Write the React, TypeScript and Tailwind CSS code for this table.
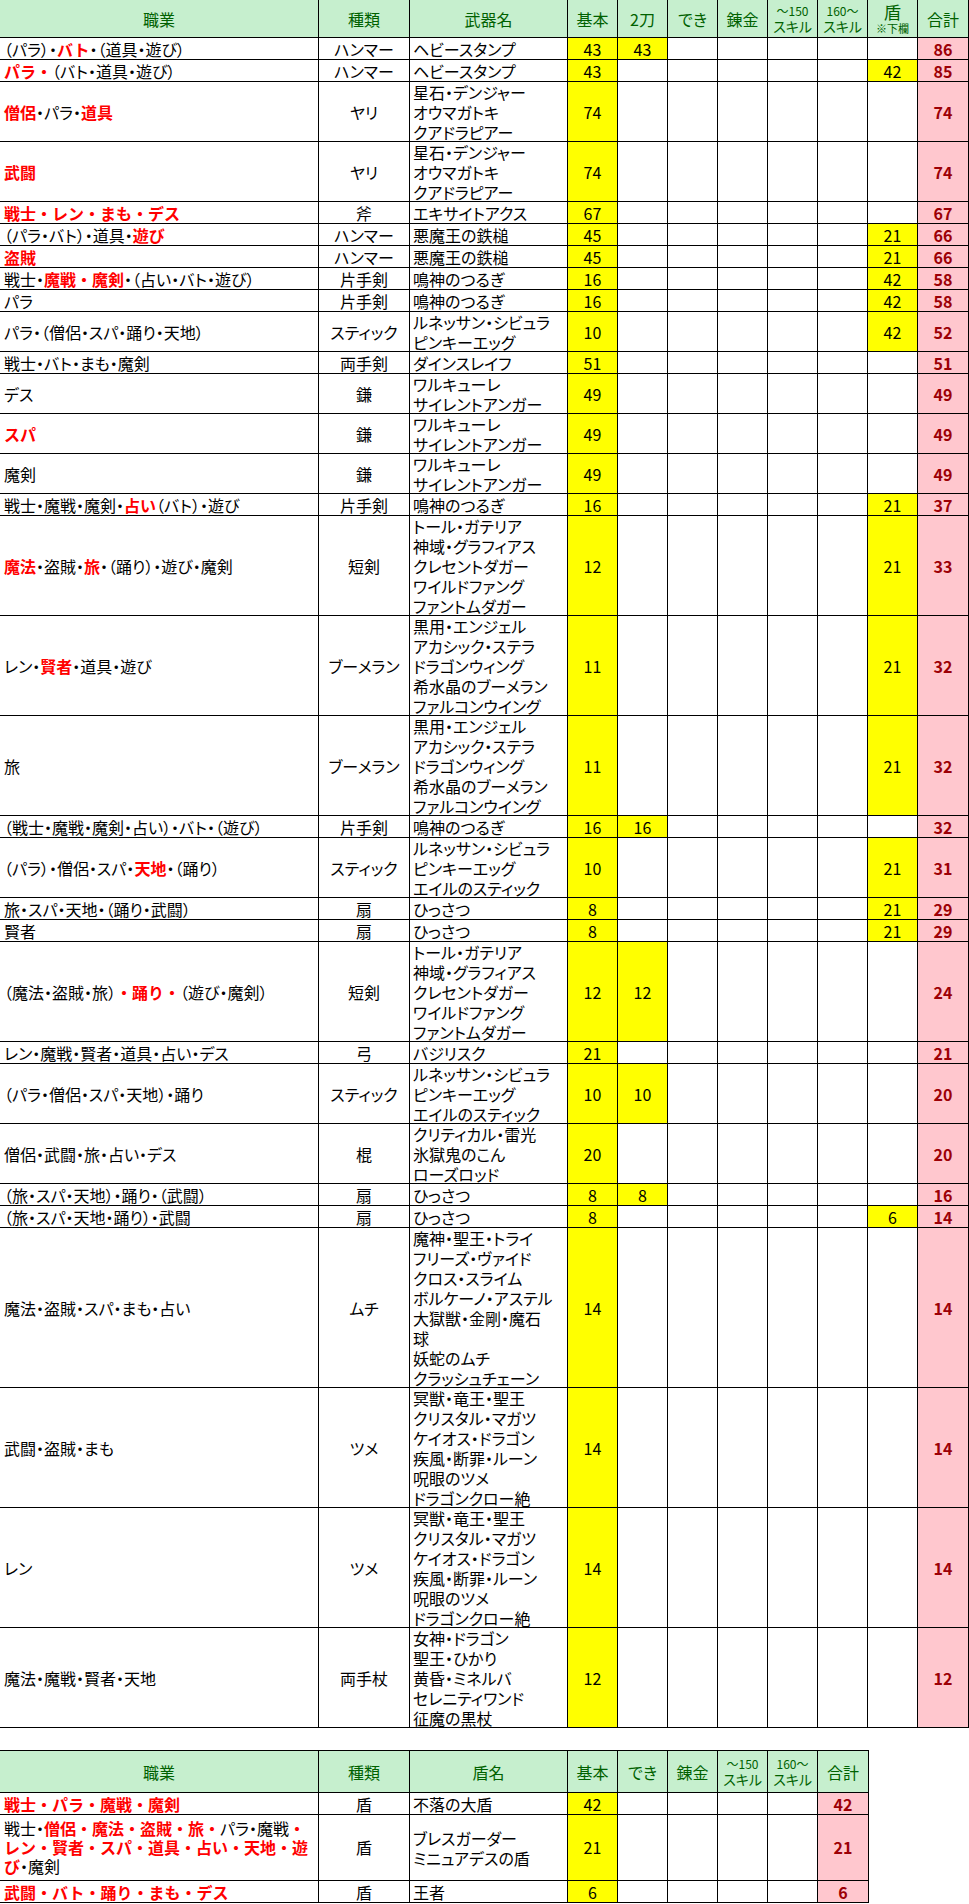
import React from "react"

type Seg = [string, boolean?]

type Row = {
  job: Seg[]
  type: string
  weapons: string[]
  base: number
  dual?: number
  shield?: number
  total: number
}

const rows: Row[] = [
  { job: [["（パラ）・"], ["バト", true], ["・（道具・遊び）"]], type: "ハンマー", weapons: ["ヘビースタンプ"], base: 43, dual: 43, total: 86 },
  { job: [["パラ・", true], ["（バト・道具・遊び）"]], type: "ハンマー", weapons: ["ヘビースタンプ"], base: 43, shield: 42, total: 85 },
  { job: [["僧侶", true], ["・パラ・"], ["道具", true]], type: "ヤリ", weapons: ["星石・デンジャー", "オウマガトキ", "クアドラピアー"], base: 74, total: 74 },
  { job: [["武闘", true]], type: "ヤリ", weapons: ["星石・デンジャー", "オウマガトキ", "クアドラピアー"], base: 74, total: 74 },
  { job: [["戦士・レン・まも・デス", true]], type: "斧", weapons: ["エキサイトアクス"], base: 67, total: 67 },
  { job: [["（パラ・バト）・道具・"], ["遊び", true]], type: "ハンマー", weapons: ["悪魔王の鉄槌"], base: 45, shield: 21, total: 66 },
  { job: [["盗賊", true]], type: "ハンマー", weapons: ["悪魔王の鉄槌"], base: 45, shield: 21, total: 66 },
  { job: [["戦士・"], ["魔戦・魔剣", true], ["・（占い・バト・遊び）"]], type: "片手剣", weapons: ["鳴神のつるぎ"], base: 16, shield: 42, total: 58 },
  { job: [["パラ"]], type: "片手剣", weapons: ["鳴神のつるぎ"], base: 16, shield: 42, total: 58 },
  { job: [["パラ・（僧侶・スパ・踊り・天地）"]], type: "スティック", weapons: ["ルネッサン・シビュラ", "ピンキーエッグ"], base: 10, shield: 42, total: 52 },
  { job: [["戦士・バト・まも・魔剣"]], type: "両手剣", weapons: ["ダインスレイフ"], base: 51, total: 51 },
  { job: [["デス"]], type: "鎌", weapons: ["ワルキューレ", "サイレントアンガー"], base: 49, total: 49 },
  { job: [["スパ", true]], type: "鎌", weapons: ["ワルキューレ", "サイレントアンガー"], base: 49, total: 49 },
  { job: [["魔剣"]], type: "鎌", weapons: ["ワルキューレ", "サイレントアンガー"], base: 49, total: 49 },
  { job: [["戦士・魔戦・魔剣・"], ["占い", true], ["（バト）・遊び"]], type: "片手剣", weapons: ["鳴神のつるぎ"], base: 16, shield: 21, total: 37 },
  {
    job: [["魔法", true], ["・盗賊・"], ["旅", true], ["・（踊り）・遊び・魔剣"]],
    type: "短剣",
    weapons: ["トール・ガテリア", "神域・グラフィアス", "クレセントダガー", "ワイルドファング", "ファントムダガー"],
    base: 12,
    shield: 21,
    total: 33,
  },
  {
    job: [["レン・"], ["賢者", true], ["・道具・遊び"]],
    type: "ブーメラン",
    weapons: ["黒用・エンジェル", "アカシック・ステラ", "ドラゴンウィング", "希水晶のブーメラン", "ファルコンウイング"],
    base: 11,
    shield: 21,
    total: 32,
  },
  {
    job: [["旅"]],
    type: "ブーメラン",
    weapons: ["黒用・エンジェル", "アカシック・ステラ", "ドラゴンウィング", "希水晶のブーメラン", "ファルコンウイング"],
    base: 11,
    shield: 21,
    total: 32,
  },
  { job: [["（戦士・魔戦・魔剣・占い）・バト・（遊び）"]], type: "片手剣", weapons: ["鳴神のつるぎ"], base: 16, dual: 16, total: 32 },
  {
    job: [["（パラ）・僧侶・スパ・"], ["天地", true], ["・（踊り）"]],
    type: "スティック",
    weapons: ["ルネッサン・シビュラ", "ピンキーエッグ", "エイルのスティック"],
    base: 10,
    shield: 21,
    total: 31,
  },
  { job: [["旅・スパ・天地・（踊り・武闘）"]], type: "扇", weapons: ["ひっさつ"], base: 8, shield: 21, total: 29 },
  { job: [["賢者"]], type: "扇", weapons: ["ひっさつ"], base: 8, shield: 21, total: 29 },
  {
    job: [["（魔法・盗賊・旅）"], ["・踊り・", true], ["（遊び・魔剣）"]],
    type: "短剣",
    weapons: ["トール・ガテリア", "神域・グラフィアス", "クレセントダガー", "ワイルドファング", "ファントムダガー"],
    base: 12,
    dual: 12,
    total: 24,
  },
  { job: [["レン・魔戦・賢者・道具・占い・デス"]], type: "弓", weapons: ["バジリスク"], base: 21, total: 21 },
  {
    job: [["（パラ・僧侶・スパ・天地）・踊り"]],
    type: "スティック",
    weapons: ["ルネッサン・シビュラ", "ピンキーエッグ", "エイルのスティック"],
    base: 10,
    dual: 10,
    total: 20,
  },
  {
    job: [["僧侶・武闘・旅・占い・デス"]],
    type: "棍",
    weapons: ["クリティカル・雷光", "氷獄鬼のこん", "ローズロッド"],
    base: 20,
    total: 20,
  },
  { job: [["（旅・スパ・天地）・踊り・（武闘）"]], type: "扇", weapons: ["ひっさつ"], base: 8, dual: 8, total: 16 },
  { job: [["（旅・スパ・天地・踊り）・武闘"]], type: "扇", weapons: ["ひっさつ"], base: 8, shield: 6, total: 14 },
  {
    job: [["魔法・盗賊・スパ・まも・占い"]],
    type: "ムチ",
    weapons: [
      "魔神・聖王・トライ",
      "フリーズ・ヴァイド",
      "クロス・スライム",
      "ボルケーノ・アステル",
      "大獄獣・金剛・魔石",
      "球",
      "妖蛇のムチ",
      "クラッシュチェーン",
    ],
    base: 14,
    total: 14,
  },
  {
    job: [["武闘・盗賊・まも"]],
    type: "ツメ",
    weapons: ["冥獣・竜王・聖王", "クリスタル・マガツ", "ケイオス・ドラゴン", "疾風・断罪・ルーン", "呪眼のツメ", "ドラゴンクロー絶"],
    base: 14,
    total: 14,
  },
  {
    job: [["レン"]],
    type: "ツメ",
    weapons: ["冥獣・竜王・聖王", "クリスタル・マガツ", "ケイオス・ドラゴン", "疾風・断罪・ルーン", "呪眼のツメ", "ドラゴンクロー絶"],
    base: 14,
    total: 14,
  },
  {
    job: [["魔法・魔戦・賢者・天地"]],
    type: "両手杖",
    weapons: ["女神・ドラゴン", "聖王・ひかり", "黄昏・ミネルバ", "セレニティワンド", "征魔の黒杖"],
    base: 12,
    total: 12,
  },
]

// red highlighted jobs are set full width, like the sheet's bold gothic
function Job({ segs }: { segs: Seg[] }) {
  return (
    <>
      {segs.map(([text, red], i) => (
        <span key={i} className={red ? "font-bold text-[#ff0000] [font-feature-settings:normal]" : ""}>
          {text}
        </span>
      ))}
    </>
  )
}

function Skill({ top }: { top: string }) {
  return (
    <div className="flex flex-col items-center">
      <span className="text-[12px] leading-[14px]">{top}</span>
      <span className="text-[14px] leading-[16px]">スキル</span>
    </div>
  )
}

const head = "flex shrink-0 items-center justify-center border-r border-black"
const cell = "flex shrink-0 items-center border-r border-black"
const num = "flex w-[50px] shrink-0 items-center justify-center border-r border-black"
const total = "flex w-[51px] shrink-0 items-center justify-center border-r border-black bg-[#ffc7ce] font-bold text-[#9c0006]"

function MainTable() {
  return (
    <div className="w-[969px]">
      <div className="flex h-[38px] border-b border-black bg-[#c6efce] text-[16px] leading-[20px] text-[#006100]">
        <div className={`${head} w-[319px]`}>職業</div>
        <div className={`${head} w-[91px]`}>種類</div>
        <div className={`${head} w-[158px]`}>武器名</div>
        <div className={`${head} w-[50px]`}>基本</div>
        <div className={`${head} w-[50px]`}>2刀</div>
        <div className={`${head} w-[50px]`}>でき</div>
        <div className={`${head} w-[50px]`}>錬金</div>
        <div className={`${head} w-[50px]`}>
          <Skill top="～150" />
        </div>
        <div className={`${head} w-[50px]`}>
          <Skill top="160～" />
        </div>
        <div className={`${head} w-[50px] flex-col`}>
          <span className="text-[17px] leading-[20px]">盾</span>
          <span className="text-[11px] leading-[13px]">※下欄</span>
        </div>
        <div className={`${head} w-[51px]`}>合計</div>
      </div>
      {rows.map((r, i) => {
        const h = r.weapons.length === 1 ? 22 : r.weapons.length * 20
        return (
          <div key={i} className="flex border-b border-black text-[16px] leading-[20px]" style={{ height: h }}>
            <div className={`${cell} w-[319px] whitespace-nowrap pl-[4px]`}>
              <Job segs={r.job} />
            </div>
            <div className={`${cell} w-[91px] justify-center whitespace-nowrap`}>{r.type}</div>
            <div className={`${cell} w-[158px] flex-col items-start justify-center whitespace-nowrap pl-[3px]`}>
              {r.weapons.map((w) => (
                <span key={w}>{w}</span>
              ))}
            </div>
            <div className={`${num} bg-[#ffff00]`}>{r.base}</div>
            <div className={`${num} ${r.dual ? "bg-[#ffff00]" : ""}`}>{r.dual}</div>
            <div className={num}></div>
            <div className={num}></div>
            <div className={num}></div>
            <div className={num}></div>
            <div className={`${num} ${r.shield ? "bg-[#ffff00]" : ""}`}>{r.shield}</div>
            <div className={total}>{r.total}</div>
          </div>
        )
      })}
    </div>
  )
}

function ShieldTable() {
  return (
    <div className="w-[869px]">
      <div className="flex h-[43px] border-y border-black bg-[#c6efce] text-[16px] leading-[20px] text-[#006100]">
        <div className={`${head} w-[319px]`}>職業</div>
        <div className={`${head} w-[91px]`}>種類</div>
        <div className={`${head} w-[158px]`}>盾名</div>
        <div className={`${head} w-[50px]`}>基本</div>
        <div className={`${head} w-[50px]`}>でき</div>
        <div className={`${head} w-[50px]`}>錬金</div>
        <div className={`${head} w-[50px]`}>
          <Skill top="～150" />
        </div>
        <div className={`${head} w-[50px]`}>
          <Skill top="160～" />
        </div>
        <div className={`${head} w-[51px]`}>合計</div>
      </div>

      <div className="flex h-[22px] border-b border-black text-[16px] leading-[20px]">
        <div className={`${cell} w-[319px] whitespace-nowrap pl-[4px]`}>
          <Job segs={[["戦士・パラ・魔戦・魔剣", true]]} />
        </div>
        <div className={`${cell} w-[91px] justify-center`}>盾</div>
        <div className={`${cell} w-[158px] pl-[3px]`}>不落の大盾</div>
        <div className={`${num} bg-[#ffff00]`}>42</div>
        <div className={num}></div>
        <div className={num}></div>
        <div className={num}></div>
        <div className={num}></div>
        <div className={total}>42</div>
      </div>

      <div className="flex h-[66px] border-b border-black text-[16px] leading-[19px]">
        <div className={`${cell} w-[319px] flex-col items-start justify-center whitespace-nowrap pl-[4px]`}>
          <div className="flex">
            <Job segs={[["戦士・"], ["僧侶・魔法・盗賊・旅・", true], ["パラ・魔戦"], ["・", true]]} />
          </div>
          <div className="flex">
            <Job segs={[["レン・賢者・スパ・道具・占い・天地・遊", true]]} />
          </div>
          <div className="flex">
            <Job segs={[["び", true], ["・魔剣"]]} />
          </div>
        </div>
        <div className={`${cell} w-[91px] justify-center`}>盾</div>
        <div className={`${cell} w-[158px] flex-col items-start justify-center pl-[3px] leading-[20px]`}>
          <span>ブレスガーダー</span>
          <span>ミニュアデスの盾</span>
        </div>
        <div className={`${num} bg-[#ffff00]`}>21</div>
        <div className={num}></div>
        <div className={num}></div>
        <div className={num}></div>
        <div className={num}></div>
        <div className={total}>21</div>
      </div>

      <div className="flex h-[22px] border-b border-black text-[16px] leading-[20px]">
        <div className={`${cell} w-[319px] whitespace-nowrap pl-[4px]`}>
          <Job segs={[["武闘・バト・踊り・まも・デス", true]]} />
        </div>
        <div className={`${cell} w-[91px] justify-center`}>盾</div>
        <div className={`${cell} w-[158px] pl-[3px]`}>王者</div>
        <div className={`${num} bg-[#ffff00]`}>6</div>
        <div className={num}></div>
        <div className={num}></div>
        <div className={num}></div>
        <div className={num}></div>
        <div className={total}>6</div>
      </div>
    </div>
  )
}

export default function App() {
  return (
    <div className="min-h-[1904px] w-[969px] overflow-hidden bg-white font-['Noto_Sans_CJK_JP',sans-serif] text-black [font-feature-settings:'palt']">
      <MainTable />
      <div className="h-[22px]" />
      <ShieldTable />
    </div>
  )
}
